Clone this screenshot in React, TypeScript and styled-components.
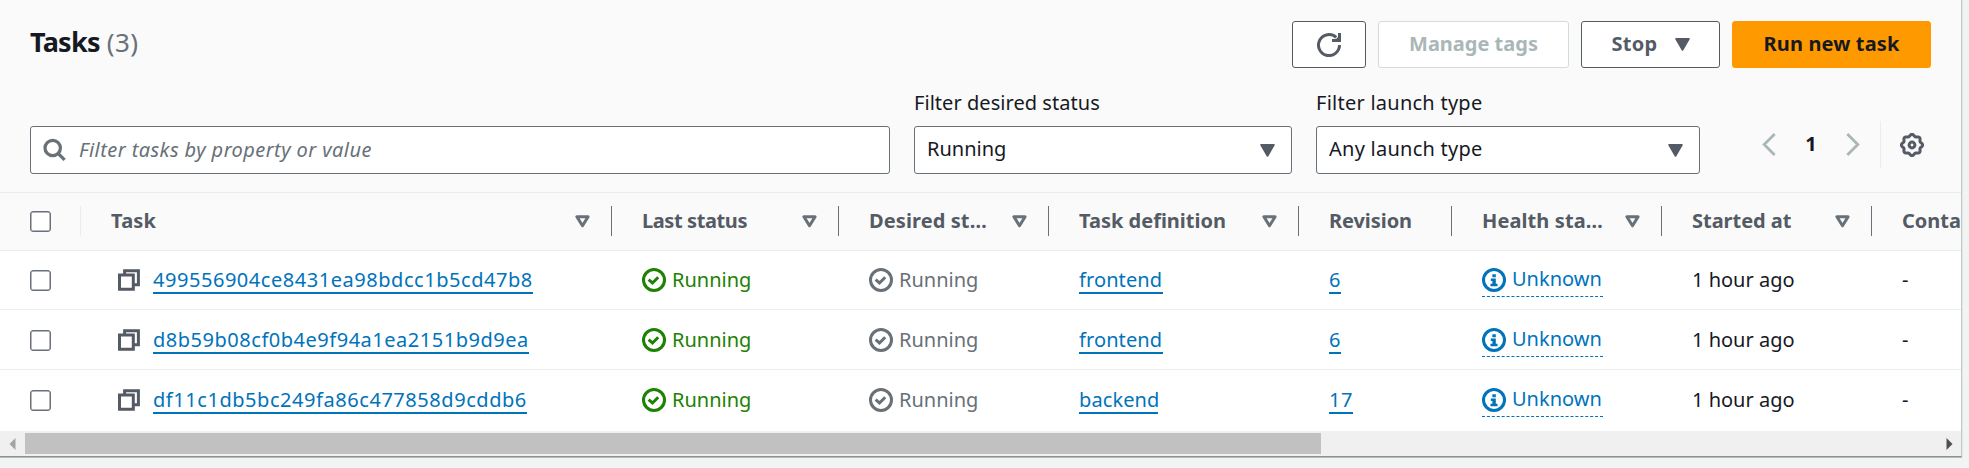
import React from 'react';
import styled, { createGlobalStyle, css } from 'styled-components';

const GlobalStyle = createGlobalStyle`
  *, *::before, *::after { box-sizing: border-box; }
  body {
    margin: 0;
    background: #f2f3f3;
    color: #16191f;
    font: 400 20px/25px "Noto Sans", "Open Sans", sans-serif;
    overflow: hidden;
  }
`;

const Page = styled.div`
  width: 1969px;
  height: 468px;
  background: #f2f3f3;
`;

const Panel = styled.section`
  width: 1962px;
  height: 457px;
  display: flex;
  flex-direction: column;
  background: #fff;
  border-right: 1px solid #c4c9ca;
  border-bottom: 1px solid #879196;
  box-shadow: 0 1px 0 #b5bcbd, 1px 0 0 #e3e6e6;
`;

const PanelHeader = styled.header`
  height: 193px;
  padding: 21px 30px 0;
  background: #fafafa;
  border-bottom: 1px solid #eaeded;
`;

const TitleBar = styled.div`
  display: flex;
  justify-content: space-between;
  align-items: flex-start;
`;

const Text = styled.span<{ $spacing?: number }>`
  letter-spacing: ${({ $spacing = 0 }) => $spacing}px;
  white-space: pre;
`;

const Title = styled.h2`
  margin: 0;
  display: flex;
  gap: 7px;
  font-size: 27px;
  line-height: 42px;
  font-weight: 700;
`;

const Counter = styled.span`
  color: #687078;
  font-size: 26px;
  font-weight: 400;
  letter-spacing: 0.4px;
`;

const Actions = styled.div`
  display: flex;
  gap: 12px;
`;

const Button = styled.button<{ $width: number; $variant?: 'normal' | 'primary' | 'disabled'; $gap?: number }>`
  width: ${({ $width }) => $width}px;
  height: 47px;
  padding: 0;
  display: flex;
  align-items: center;
  justify-content: center;
  gap: ${({ $gap = 0 }) => $gap}px;
  font: inherit;
  font-weight: 700;
  color: #545b64;
  background: #fff;
  border: 1px solid #545b64;
  border-radius: 3px;
  ${({ $variant }) => $variant === 'primary' && css`
    color: #16191f;
    background: #ff9900;
    border-color: #ff9900;
  `}
  ${({ $variant }) => $variant === 'disabled' && css`
    color: #aab7b8;
    border-color: #d5dbdb;
  `}
  & > span { padding-bottom: 3px; }
`;

const Filters = styled.div`
  display: flex;
  align-items: flex-end;
  gap: 24px;
  margin-top: 22px;
  height: 84px;
`;

const Field = styled.label<{ $width: number }>`
  width: ${({ $width }) => $width}px;
  display: flex;
  flex-direction: column;
  gap: 11px;
`;

const Control = styled.div`
  height: 48px;
  padding: 0 16px 0 12px;
  display: flex;
  align-items: center;
  justify-content: space-between;
  background: #fff;
  border: 1px solid #687078;
  border-radius: 3px;
  & > span { padding-bottom: 4px; }
`;

const SearchBox = styled(Control)`
  width: 860px;
  justify-content: flex-start;
  gap: 12px;
  color: #687078;
  font-style: italic;
  & > span { padding-bottom: 2px; }
`;

const Pager = styled.div`
  display: flex;
  align-items: center;
  height: 47px;
  margin: 0 0 6px 38px;
`;

const PageNumber = styled.span`
  width: 70px;
  padding-bottom: 2px;
  text-align: center;
  font-weight: 700;
`;

const Preferences = styled.div`
  height: 47px;
  margin-left: 20px;
  padding-left: 19px;
  display: flex;
  align-items: center;
  border-left: 1px solid #eaeded;
`;

const COLUMNS = '81px 531px 227px 210px 250px 153px 210px 210px 89px';

const HeadRow = styled.div`
  display: grid;
  grid-template-columns: ${COLUMNS};
  height: 58px;
  padding-top: 13px;
  background: #fafafa;
  border-bottom: 1px solid #eaeded;
`;

const HeadCell = styled.div<{ $tone?: string; $last?: boolean }>`
  height: 30px;
  padding: 0 21px 0 30px;
  display: flex;
  align-items: center;
  justify-content: space-between;
  overflow: hidden;
  color: #545b64;
  font-weight: 700;
  border-right: ${({ $last, $tone = '#687078' }) => ($last ? 'none' : `1px solid ${$tone}`)};
  ${({ $last }) => $last && css`padding-right: 0;`}
  & > span { padding-bottom: 1px; }
`;

const BodyRow = styled.div`
  display: grid;
  grid-template-columns: ${COLUMNS};
  align-items: start;
  height: 60px;
  padding-top: 17px;
  border-bottom: 1px solid #eaeded;
  &:nth-of-type(2) { height: 59px; padding-top: 16px; }
  &:last-of-type { height: 61px; border-bottom: none; }
`;

const Cell = styled.div`
  padding-left: 30px;
  display: flex;
  align-items: flex-start;
`;

const Table = styled.div`
  overflow: hidden;
`;

const Checkbox = styled.span<{ $head?: boolean }>`
  width: 21px;
  height: 21px;
  margin-top: ${({ $head }) => ($head ? 1 : 3)}px;
  background: #fff;
  border: 1px solid #687078;
  border-radius: 3px;
  box-shadow: inset 0 0 0 0.5px #687078;
`;

const Link = styled.a<{ $spacing?: number; $width: number }>`
  width: ${({ $width }) => $width}px;
  color: #0073bb;
  border-bottom: 2px solid #0073bb;
  letter-spacing: ${({ $spacing = 0 }) => $spacing}px;
  white-space: nowrap;
`;

const CopySlot = styled.span`
  display: flex;
  margin: 2px 13px 0 7px;
`;

const Status = styled.span<{ $color: string }>`
  display: flex;
  gap: 6px;
  color: ${({ $color }) => $color};
  & > svg { margin-top: 1px; }
`;

const Popover = styled(Status)`
  width: 121px;
  height: 30px;
  border-bottom: 1px dashed #0073bb;
  & > span { margin-top: -1px; }
`;

const ScrollBar = styled.div`
  height: 25px;
  display: flex;
  align-items: center;
  background: #f0f0f0;
`;

const ScrollEnd = styled.span<{ $pad: number }>`
  width: 25px;
  display: flex;
  padding-left: ${({ $pad }) => $pad}px;
`;

const Track = styled.div`
  flex: 1;
  height: 21px;
`;

const Thumb = styled.div`
  width: 1296px;
  height: 21px;
  background: #c1c1c1;
`;

const SolidCaret = () => (
  <svg width="15" height="13" viewBox="0 0 15 13">
    <path d="M1 0.9H14L7.5 12Z" fill="#545b64" stroke="#545b64" strokeWidth="1.6" strokeLinejoin="round" />
  </svg>
);

const SortCaret = () => (
  <svg width="15" height="13" viewBox="0 0 15 13">
    <path d="M1.9 1.7H13.1L7.5 10.8Z" fill="none" stroke="#687078" strokeWidth="3" strokeLinejoin="round" />
  </svg>
);

const SearchIcon = () => (
  <svg width="24" height="24" viewBox="0 0 24 24" fill="none" stroke="#687078" strokeWidth="3.2">
    <circle cx="9.7" cy="10" r="7.7" />
    <path d="M15 15.3L21.6 21.9" />
  </svg>
);

const RefreshIcon = () => (
  <svg width="24" height="24" viewBox="0 0 24 24" fill="none" stroke="#545b64" strokeWidth="3">
    <path d="M22.5 12A10.5 10.5 0 1 1 19.2 4.4" />
    <path d="M15 7.4H22.5V0" />
    <path d="M18 7L22 3V7Z" fill="#545b64" stroke="none" />
  </svg>
);

const gearOutline = Array.from({ length: 97 }, (_, i) => {
  const a = (i / 96) * Math.PI * 2;
  const r = 9.7 + 0.95 * Math.cos(8 * a);
  return `${i ? 'L' : 'M'}${(12 + r * Math.cos(a)).toFixed(2)} ${(12 + r * Math.sin(a)).toFixed(2)}`;
}).join('') + 'Z';

const GearIcon = () => (
  <svg width="24" height="24" viewBox="0 0 24 24" fill="none" stroke="#545b64" strokeWidth="3">
    <path d={gearOutline} />
    <circle cx="12" cy="12" r="2.9" />
  </svg>
);

const Chevron = ({ right }: { right?: boolean }) => (
  <svg width="14" height="23" viewBox="0 0 14 23" fill="none" stroke="#aab7b8" strokeWidth="2.8">
    <path d={right ? 'M1.3 1L11.8 11.5L1.3 22' : 'M12.7 1L2.2 11.5L12.7 22'} />
  </svg>
);

const CopyIcon = () => (
  <svg width="22" height="22" viewBox="0 0 22 22" fill="none" stroke="#545b64" strokeWidth="3">
    <path d="M1.5 6H15.3V20.2H1.5Z" />
    <path d="M6.6 5V1.8H20.4V15.8H16" />
  </svg>
);

const CheckIcon = () => (
  <svg width="24" height="24" viewBox="0 0 24 24" fill="none" stroke="currentColor">
    <circle cx="12" cy="12" r="10.5" strokeWidth="3" />
    <path d="M6.6 11.6L10.5 15L16.2 9.2" strokeWidth="3" />
  </svg>
);

const InfoIcon = () => (
  <svg width="24" height="24" viewBox="0 0 24 24" fill="none">
    <circle cx="12" cy="12" r="10.5" stroke="currentColor" strokeWidth="3" />
    <path d="M10.4 6.2h3.4v3h-3.4zM8.8 10.6h5v5.2h1.7v2.4H8.5v-2.4h1.9v-2.9H8.8z" fill="currentColor" />
  </svg>
);

const ScrollArrow = ({ right }: { right?: boolean }) => (
  <svg width="7" height="12" viewBox="0 0 7 12">
    <path d={right ? 'M0.5 0V12L6.5 6Z' : 'M6.5 0V12L0.5 6Z'} fill={right ? '#505050' : '#a3a3a3'} />
  </svg>
);

const headings = [
  { label: 'Task', spacing: 0.2, sortable: true },
  { label: 'Last status', spacing: -0.4, sortable: true },
  { label: 'Desired st…', spacing: 0.1, sortable: true },
  { label: 'Task definition', spacing: 0, sortable: true },
  { label: 'Revision', spacing: -0.07, sortable: false },
  { label: 'Health sta…', spacing: 0.1, sortable: true },
  { label: 'Started at', spacing: -0.03, sortable: true },
];

const tasks = [
  { id: '499556904ce8431ea98bdcc1b5cd47b8', width: 380, spacing: 0.54, family: 'frontend', familyWidth: 84, revision: '6', revisionWidth: 12 },
  { id: 'd8b59b08cf0b4e9f94a1ea2151b9d9ea', width: 376, spacing: 0.52, family: 'frontend', familyWidth: 84, revision: '6', revisionWidth: 12 },
  { id: 'df11c1db5bc249fa86c477858d9cddb6', width: 374, spacing: 0.55, family: 'backend', familyWidth: 79, revision: '17', revisionWidth: 24 },
];

export default function App() {
  return (
    <Page>
      <GlobalStyle />
      <Panel>
        <PanelHeader>
          <TitleBar>
            <Title>
              <Text $spacing={-0.75}>Tasks</Text>
              <Counter>(3)</Counter>
            </Title>
            <Actions>
              <Button $width={74} aria-label="Refresh"><RefreshIcon /></Button>
              <Button $width={191} $variant="disabled"><Text>Manage tags</Text></Button>
              <Button $width={139} $gap={17}><Text $spacing={0.3}>Stop</Text><SolidCaret /></Button>
              <Button $width={199} $variant="primary"><Text $spacing={0.14}>Run new task</Text></Button>
            </Actions>
          </TitleBar>
          <Filters>
            <SearchBox>
              <SearchIcon />
              <Text $spacing={0.43}>Filter tasks by property or value</Text>
            </SearchBox>
            <Field $width={378}>
              <Text $spacing={0.05}>Filter desired status</Text>
              <Control><Text>Running</Text><SolidCaret /></Control>
            </Field>
            <Field $width={384}>
              <Text $spacing={0.25}>Filter launch type</Text>
              <Control><Text $spacing={0.25}>Any launch type</Text><SolidCaret /></Control>
            </Field>
            <Pager>
              <Chevron />
              <PageNumber>1</PageNumber>
              <Chevron right />
              <Preferences><GearIcon /></Preferences>
            </Pager>
          </Filters>
        </PanelHeader>
        <Table>
          <HeadRow>
            <HeadCell $tone="#eaeded"><Checkbox $head /></HeadCell>
            {headings.map((h) => (
              <HeadCell key={h.label}>
                <Text $spacing={h.spacing}>{h.label}</Text>
                {h.sortable && <SortCaret />}
              </HeadCell>
            ))}
            <HeadCell $last><Text>Conta</Text></HeadCell>
          </HeadRow>
          {tasks.map((t) => (
            <BodyRow key={t.id}>
              <Cell><Checkbox /></Cell>
              <Cell>
                <CopySlot><CopyIcon /></CopySlot>
                <Link $width={t.width} $spacing={t.spacing}>{t.id}</Link>
              </Cell>
              <Cell><Status $color="#1d8102"><CheckIcon /><Text>Running</Text></Status></Cell>
              <Cell><Status $color="#687078"><CheckIcon /><Text>Running</Text></Status></Cell>
              <Cell><Link $width={t.familyWidth} $spacing={0.1}>{t.family}</Link></Cell>
              <Cell><Link $width={t.revisionWidth} $spacing={0.5}>{t.revision}</Link></Cell>
              <Cell><Popover $color="#0073bb"><InfoIcon /><Text>Unknown</Text></Popover></Cell>
              <Cell><Text>1 hour ago</Text></Cell>
              <Cell><Text>-</Text></Cell>
            </BodyRow>
          ))}
        </Table>
        <ScrollBar>
          <ScrollEnd $pad={9}><ScrollArrow /></ScrollEnd>
          <Track><Thumb /></Track>
          <ScrollEnd $pad={10}><ScrollArrow right /></ScrollEnd>
        </ScrollBar>
      </Panel>
    </Page>
  );
}
